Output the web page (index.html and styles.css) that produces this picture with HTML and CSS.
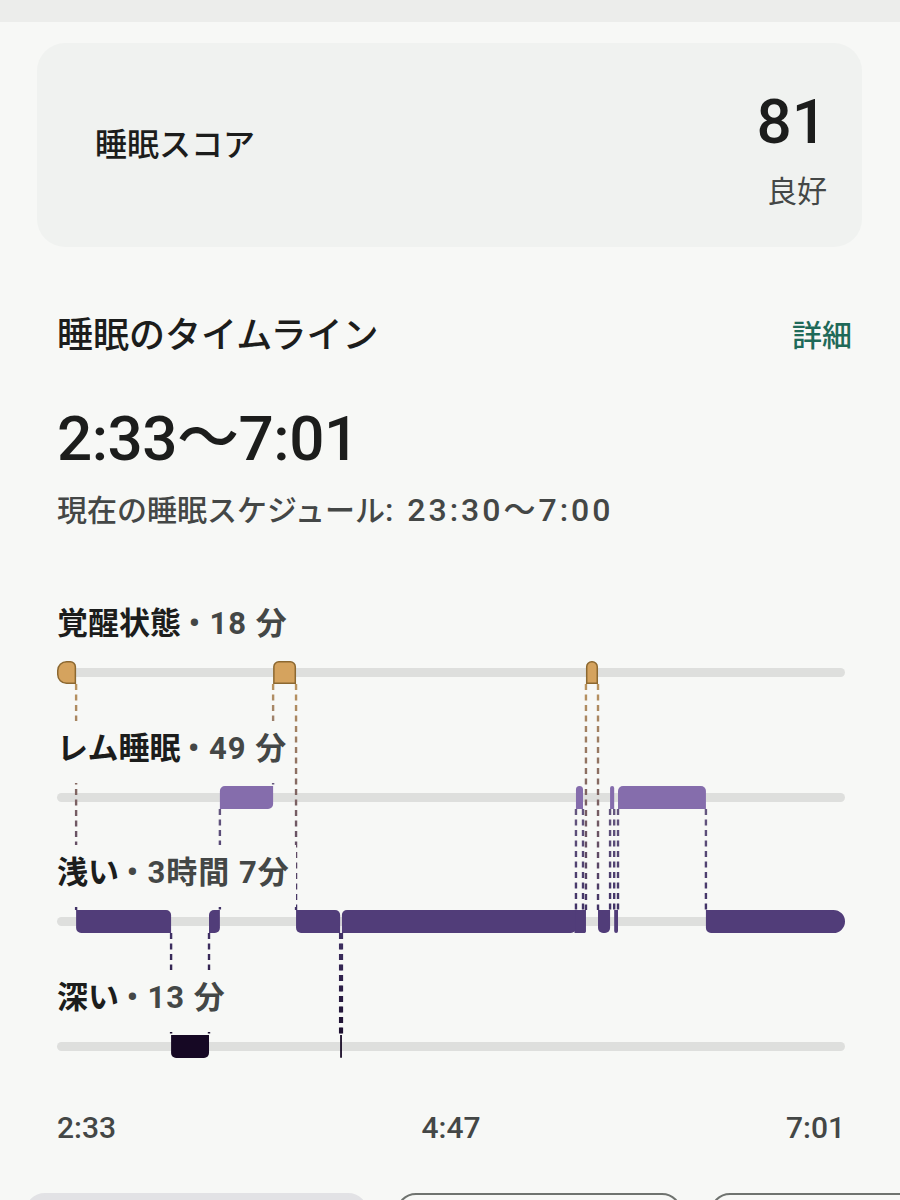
FILE: index.html
```html
<!DOCTYPE html>
<html lang="ja">
<head>
    <meta charset="UTF-8">
    <meta name="viewport" content="width=device-width, initial-scale=1.0">
    <title>睡眠</title>
    <link rel="stylesheet" href="styles.css">
</head>
<body>
    <div class="top-strip"></div>

    <section class="score-card">
        <div class="score-title">睡眠スコア</div>
        <div class="score-value">
            <div class="score-num">81</div>
            <div class="score-label">良好</div>
        </div>
    </section>

    <section class="timeline">
        <header class="timeline-head">
            <h2>睡眠のタイムライン</h2>
            <a class="detail-link" href="#">詳細</a>
        </header>
        <div class="range">2:33〜7:01</div>
        <div class="schedule">現在の睡眠スケジュール<span class="time">: 23:30〜7:00</span></div>

        <div class="chart" id="chart">
            <svg class="chart-lines" id="chartLines"></svg>
            <div class="stage">
                <div class="stage-label">覚醒状態 <span class="value">• 18 分</span></div>
                <div class="stage-track"></div>
            </div>
            <div class="stage">
                <div class="stage-label">レム睡眠 <span class="value">• 49 分</span></div>
                <div class="stage-track"></div>
            </div>
            <div class="stage">
                <div class="stage-label">浅い <span class="value">• 3時間 7分</span></div>
                <div class="stage-track"></div>
            </div>
            <div class="stage">
                <div class="stage-label">深い <span class="value">• 13 分</span></div>
                <div class="stage-track"></div>
            </div>
        </div>

        <div class="axis">
            <span>2:33</span>
            <span>4:47</span>
            <span>7:01</span>
        </div>
    </section>

    <div class="chips">
        <span class="chip chip-active"></span>
        <span class="chip"></span>
        <span class="chip chip-wide"></span>
    </div>

    <script>
        // 2:33 から 7:01 までの分数
        const TOTAL = 268;
        const BAR_H = 23;
        const R = 5;

        const STAGES = {
            awake: { row: 0, fill: '#d5a35e', stroke: '#8c6830', dash: '#bb955f' },
            rem:   { row: 1, fill: '#856dac', dash: '#65577f' },
            light: { row: 2, fill: '#513d79', dash: '#413266' },
            deep:  { row: 3, fill: '#160824', dash: '#1c0f2e' }
        };

        // [ステージ, 開始(分), 終了(分)]
        const segments = [
            ['awake', 0, 6.5],
            ['light', 6.5, 38.8],
            ['deep', 38.8, 51.7],
            ['light', 51.7, 55.4],
            ['rem', 55.4, 73.5],
            ['awake', 73.5, 81.3],
            ['light', 81.3, 96.3],
            ['deep', 96.3, 96.9],
            ['light', 96.9, 176.5],
            ['rem', 176.5, 178.9],
            ['light', 178.9, 179.9],
            ['awake', 179.9, 184],
            ['light', 184, 188.1],
            ['rem', 188.1, 189.5],
            ['light', 189.5, 190.8],
            ['rem', 190.8, 220.7],
            ['light', 220.7, 268]
        ];

        // 短い区間の下に残る浅い睡眠のバー
        const underBars = [
            ['light', 176, 179.5]
        ];

        function barPath(x, y, w, h, tl, tr, br, bl) {
            const m = Math.min(w / 2, h / 2);
            [tl, tr, br, bl] = [tl, tr, br, bl].map(r => Math.min(r, m));
            return `M${x + tl},${y} H${x + w - tr} A${tr},${tr} 0 0 1 ${x + w},${y + tr} ` +
                `V${y + h - br} A${br},${br} 0 0 1 ${x + w - br},${y + h} H${x + bl} ` +
                `A${bl},${bl} 0 0 1 ${x},${y + h - bl} V${y + tl} A${tl},${tl} 0 0 1 ${x + tl},${y} Z`;
        }

        function drawChart() {
            const chart = document.getElementById('chart');
            const svg = document.getElementById('chartLines');
            const tracks = Array.from(chart.querySelectorAll('.stage-track'));
            const left = tracks[0].offsetLeft;
            const width = tracks[0].offsetWidth;
            const tops = tracks.map(t => t.offsetTop);
            const xOf = m => left + (m / TOTAL) * width;
            const byRow = Object.keys(STAGES).sort((a, b) => STAGES[a].row - STAGES[b].row);

            let defs = '';
            let lines = '';
            let bars = '';

            // ステージ間をつなぐ点線
            for (let i = 0; i < segments.length - 1; i++) {
                const a = STAGES[segments[i][0]];
                const b = STAGES[segments[i + 1][0]];
                const x = xOf(segments[i][2]);
                const upper = Math.min(a.row, b.row);
                const lower = Math.max(a.row, b.row);
                const y1 = tops[upper] + BAR_H;
                const y2 = tops[lower];
                defs += `<linearGradient id="g${i}" gradientUnits="userSpaceOnUse" x1="${x}" y1="${y1}" x2="${x}" y2="${y2}">` +
                    `<stop offset="0" stop-color="${STAGES[byRow[upper]].dash}"/>` +
                    `<stop offset="1" stop-color="${STAGES[byRow[lower]].dash}"/></linearGradient>`;
                lines += `<line x1="${x}" y1="${y1}" x2="${x}" y2="${y2}" stroke="url(#g${i})" stroke-width="2.4" stroke-dasharray="6 4.5"/>`;
            }

            underBars.forEach(([name, start, end]) => {
                const s = STAGES[name];
                const x = xOf(start);
                bars += `<rect x="${x}" y="${tops[s.row]}" width="${xOf(end) - x}" height="${BAR_H}" fill="${s.fill}"/>`;
            });

            segments.forEach(([name, start, end], i) => {
                const s = STAGES[name];
                const prev = segments[i - 1];
                const next = segments[i + 1];
                // 点線がつながる側の角は四角くする
                const prevUp = prev && STAGES[prev[0]].row < s.row;
                const nextUp = next && STAGES[next[0]].row < s.row;
                let tl = prev ? (prevUp ? 0 : R) : 11.5;
                let bl = prev ? (prevUp ? R : 0) : 11.5;
                let tr = next ? (nextUp ? 0 : R) : 11.5;
                let br = next ? (nextUp ? R : 0) : 11.5;
                const x = xOf(start);
                const w = xOf(end) - x;
                const y = tops[s.row];
                if (s.stroke) {
                    bars += `<path d="${barPath(x + 0.75, y + 0.75, w - 1.5, BAR_H - 1.5, tl, tr, br, bl)}" fill="${s.fill}" stroke="${s.stroke}" stroke-width="1.5"/>`;
                } else {
                    bars += `<path d="${barPath(x, y, w, BAR_H, tl, tr, br, bl)}" fill="${s.fill}"/>`;
                }
            });

            svg.innerHTML = `<defs>${defs}</defs>${lines}${bars}`;
        }

        drawChart();
    </script>
</body>
</html>
```

FILE: styles.css
```css
* {
    margin: 0;
    padding: 0;
    box-sizing: border-box;
}

body {
    font-family: Roboto, "Noto Sans CJK JP", sans-serif;
    background: #f7f8f6;
    color: #1c1d1c;
    overflow: hidden;
}

.top-strip {
    height: 22px;
    background: #ecedeb;
}

/* スコアカード */
.score-card {
    margin: 21px 38px 0 37px;
    height: 204px;
    padding: 0 35px 0 58px;
    background: #f0f2f0;
    border-radius: 28px;
    display: flex;
    align-items: center;
    justify-content: space-between;
}

.score-title {
    font-size: 32px;
    font-weight: 500;
    line-height: 44px;
}

.score-value {
    text-align: right;
    margin-top: 11px;
}

.score-num {
    font-size: 62px;
    font-weight: 500;
    line-height: 64px;
    margin-bottom: 18px;
}

.score-label {
    font-size: 30px;
    line-height: 40px;
    color: #444746;
}

/* タイムライン */
.timeline {
    padding: 0 55px 0 57px;
}

.timeline-head {
    margin-top: 67px;
    display: flex;
    align-items: center;
    justify-content: space-between;
}

.timeline-head h2 {
    font-size: 36px;
    font-weight: 500;
    line-height: 44px;
}

.detail-link {
    font-size: 30px;
    font-weight: 500;
    line-height: 44px;
    color: #1f6a59;
    text-decoration: none;
    margin-right: -7px;
}

.range {
    margin-top: 45px;
    font-size: 62px;
    font-weight: 500;
    line-height: 72px;
    letter-spacing: -0.5px;
}

.schedule {
    margin-top: 15px;
    font-size: 30px;
    font-weight: 500;
    line-height: 40px;
    color: #444746;
}

.schedule .time {
    font-size: 32px;
    letter-spacing: 3px;
}

.chart {
    position: relative;
    margin-top: 65px;
}

.chart-lines {
    position: absolute;
    top: 0;
    left: 0;
    width: 100%;
    height: 100%;
    overflow: visible;
    pointer-events: none;
}

.stage {
    display: flex;
    flex-direction: column;
    align-items: flex-start;
}

.stage-label {
    position: relative;
    z-index: 1;
    background: #f7f8f6;
    font-size: 31px;
    font-weight: 700;
    line-height: 36px;
    padding: 10px 6px 16px 0;
}

.stage-label .value {
    color: #444746;
    letter-spacing: 1px;
}

.stage-track {
    align-self: stretch;
    height: 23px;
    margin: 3px 0 36.5px;
}

.stage:last-child .stage-track {
    margin-bottom: 0;
}

.stage-track::before {
    content: '';
    display: block;
    height: 9px;
    margin-top: 7px;
    border-radius: 5px;
    background: #dedfdd;
}

.axis {
    margin-top: 52px;
    display: flex;
    justify-content: space-between;
    font-size: 30px;
    font-weight: 500;
    line-height: 36px;
    color: #444746;
}

/* 下部のチップ */
.chips {
    margin-top: 47px;
    padding-left: 25px;
    display: flex;
    gap: 28px;
}

.chip {
    flex: none;
    width: 286px;
    height: 64px;
    border: 2px solid #6f736f;
    border-radius: 20px;
}

.chip-active {
    width: 343px;
    background: #e2e2e5;
    border-color: #e2e2e5;
}

.chip-wide {
    width: 320px;
}
```
